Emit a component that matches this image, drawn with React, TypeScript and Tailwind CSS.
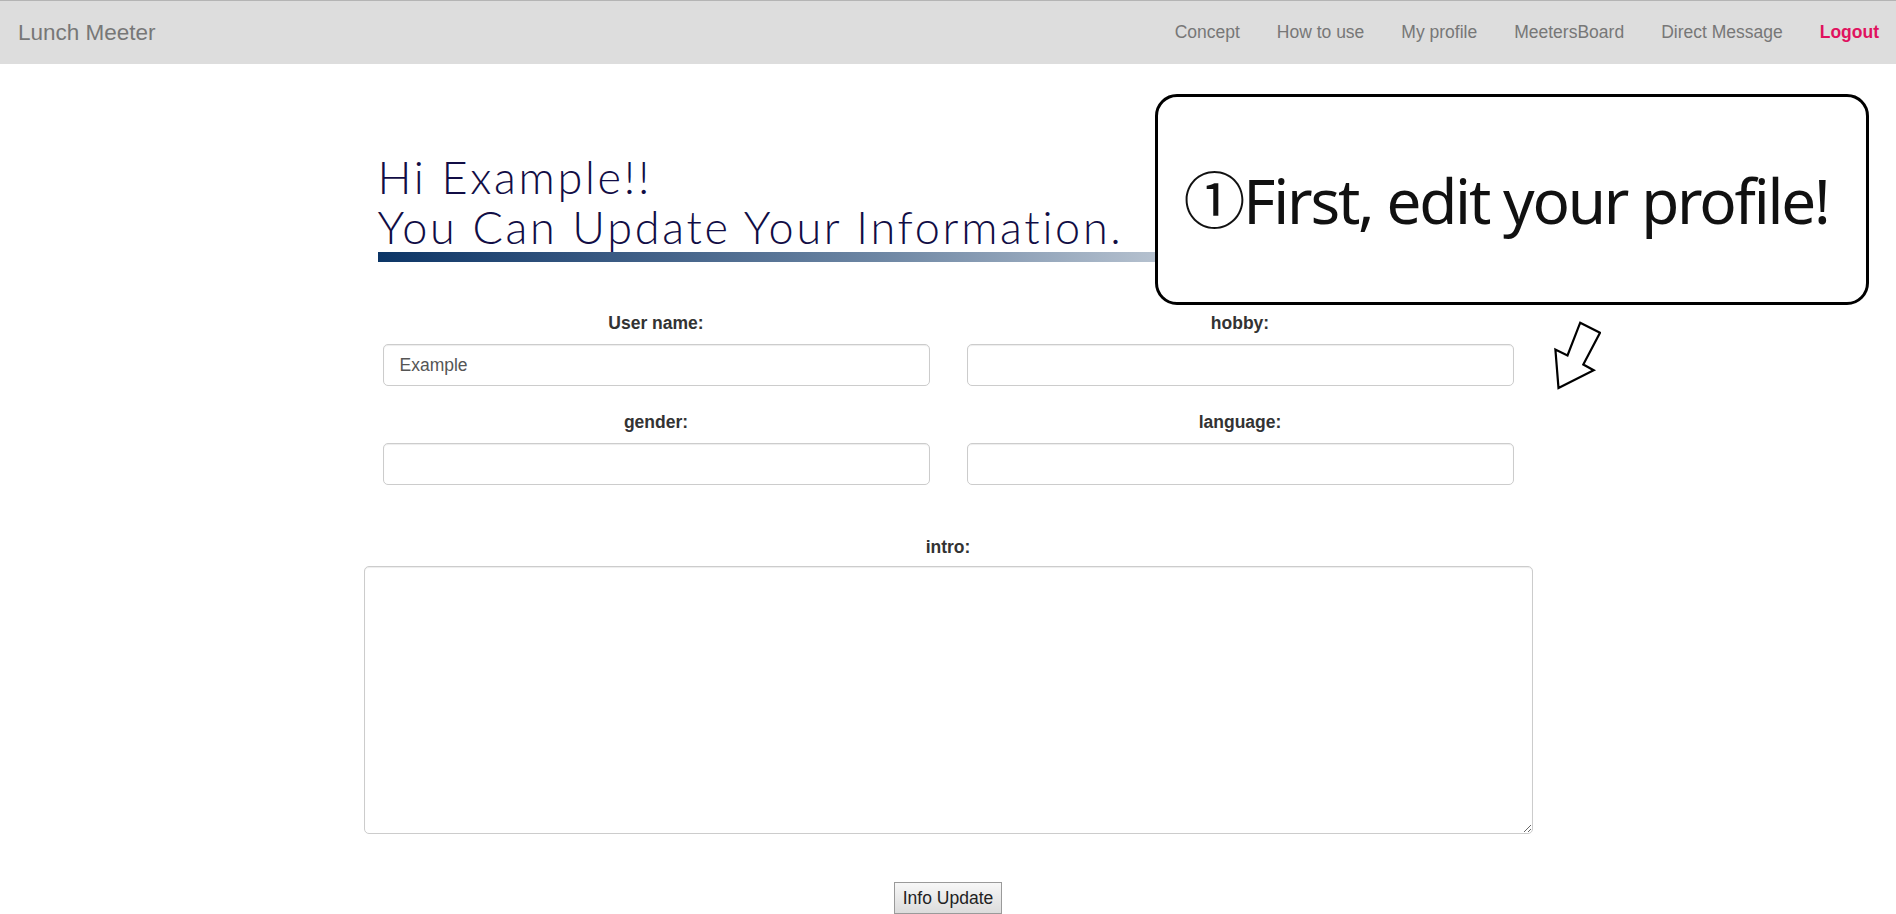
import React from "react";

const navLinks = ["Concept", "How to use", "My profile", "MeetersBoard", "Direct Message"];

function Field({ label, value }: { label: string; value?: string }) {
  return (
    <div className="flex flex-col items-stretch">
      <label className="block h-[25px] text-center text-[17.5px] font-bold leading-[25px] text-[#333333]">
        {label}
      </label>
      <input
        type="text"
        defaultValue={value ?? ""}
        className="mt-[8px] h-[42px] w-full rounded-[5px] border border-[#cccccc] bg-white px-[16px] text-[17.5px] text-[#555555] shadow-[inset_0_1px_1px_rgba(0,0,0,0.075)] outline-none"
      />
    </div>
  );
}

export default function App() {
  return (
    <div className="relative min-h-[914px] w-full overflow-hidden bg-white font-['Liberation_Sans',Arial,sans-serif]">
      {/* Navbar */}
      <nav className="flex h-[64px] items-center justify-between border-t border-[#b4b4b4] bg-[#dddddd] pl-[18px]">
        <span className="text-[22.5px] leading-[30px] text-[#777777]">Lunch Meeter</span>
        <ul className="flex items-center">
          {navLinks.map((l) => (
            <li key={l} className="px-[18.5px] text-[17.5px] leading-[25px] text-[#777777]">
              {l}
            </li>
          ))}
          <li className="pl-[18.5px] pr-[17px] text-[17.5px] font-bold leading-[25px] text-[#e0125f]">Logout</li>
        </ul>
      </nav>

      {/* Main content */}
      <main className="mx-auto w-[1169px]">
        <div className="ml-[14px] mt-[88px]">
          <h1 className="font-['Lato',sans-serif] text-[45px] font-light leading-[50px] tracking-[2.7px] text-[#110d45]">
            Hi Example!!
            <br />
            You Can Update Your Information.
          </h1>
          <div className="h-[10px] w-[1000px] bg-gradient-to-r from-[#0b3566] via-[#6d86a3] to-[#f2f2f2]" />
        </div>

        <div className="mt-[49px] grid grid-cols-2 gap-x-[37px] gap-y-[24px] px-[19px]">
          <Field label="User name:" value="Example" />
          <Field label="hobby:" />
          <Field label="gender:" />
          <Field label="language:" />
        </div>

        <div className="mt-[50px] flex flex-col">
          <label className="block h-[25px] text-center text-[17.5px] font-bold leading-[25px] text-[#333333]">
            intro:
          </label>
          <textarea className="mt-[6px] h-[268px] w-full rounded-[5px] border border-[#cccccc] bg-white px-[16px] py-[8px] text-[17.5px] text-[#555555] shadow-[inset_0_1px_1px_rgba(0,0,0,0.075)] outline-none" />
        </div>

        <div className="mt-[48px] flex justify-center">
          <button className="h-[32px] border border-[#9a9a9a] bg-gradient-to-b from-[#f7f7f7] to-[#dcdcdc] px-[8px] text-[17.5px] leading-[28px] text-[#222222]">
            Info Update
          </button>
        </div>
      </main>

      {/* Callout overlay */}
      <div className="absolute left-[1155px] top-[94px] flex h-[211px] w-[714px] items-center justify-center rounded-[22px] border-[3px] border-black bg-white pr-[12px]">
        <span className="font-['Noto_Sans','Noto_Sans_CJK_JP',sans-serif] text-[62px] leading-none tracking-[-2.2px] text-[#111111]">
          ①First, edit your profile!
        </span>
      </div>

      {/* Arrow overlay */}
      <svg
        className="absolute left-[1553px] top-[320px]"
        width="48"
        height="70"
        viewBox="-1 -1 48 70"
      >
        <polygon
          points="26.2,1.7 46,11.7 29.3,43.5 39.7,49.2 4.5,67 1.4,28.5 13.5,34.5"
          fill="white"
          stroke="black"
          strokeWidth="2.2"
          strokeLinejoin="miter"
        />
      </svg>
    </div>
  );
}
